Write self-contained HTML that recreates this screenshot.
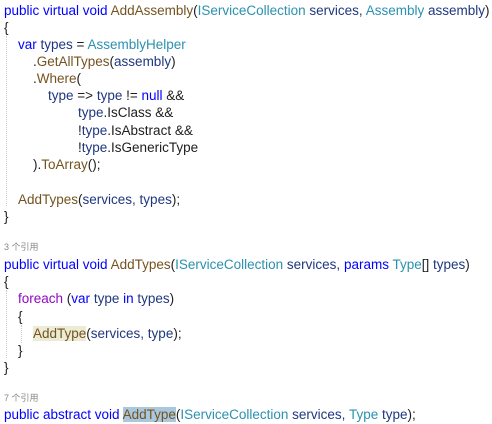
<!DOCTYPE html>
<html><head><meta charset="utf-8"><style>
body{margin:0;width:492px;height:424px;background:#fff;overflow:hidden;position:relative;font-family:"Liberation Sans","Noto Sans CJK SC",sans-serif;font-size:13.5px;color:#1f377f}
.l{position:absolute;white-space:pre;line-height:17px;height:17px}
.k{color:#0000ff}.m{color:#74531f}.t{color:#2b91af}.p{color:#8f08c4}.d{color:#1e1e1e}
.r{font-size:9px;color:#888}
.g{position:absolute;border-left:1px dotted #ccc}
.h1{background:#ebebd6}.h2{background:#a9c8dd}
</style></head><body>
<div class="g" style="left:6px;top:36px;height:170px"></div>
<div class="g" style="left:6px;top:290px;height:68px"></div>
<div class="g" style="left:21px;top:325px;height:18px"></div>
<div class="l" style="left:4px;top:2px"><span class="k">public virtual void</span> <span class="m">AddAssembly</span><span class="d">(</span><span class="t">IServiceCollection</span> services, <span class="t">Assembly</span> assembly<span class="d">)</span></div>
<div class="l d" style="left:4px;top:19px">{</div>
<div class="l" style="left:18px;top:36px"><span class="k">var</span> types <span class="d">=</span> <span class="t">AssemblyHelper</span></div>
<div class="l" style="left:33px;top:53px"><span class="d">.</span><span class="m">GetAllTypes</span><span class="d">(</span>assembly<span class="d">)</span></div>
<div class="l" style="left:33px;top:70px"><span class="d">.</span><span class="m">Where</span><span class="d">(</span></div>
<div class="l" style="left:48px;top:87px">type <span class="d">=&gt;</span> type <span class="d">!=</span> <span class="k">null</span> <span class="d">&amp;&amp;</span></div>
<div class="l" style="left:78px;top:104px">type<span class="d">.IsClass &amp;&amp;</span></div>
<div class="l" style="left:78px;top:122px"><span class="d">!</span>type<span class="d">.IsAbstract &amp;&amp;</span></div>
<div class="l" style="left:78px;top:139px"><span class="d">!</span>type<span class="d">.IsGenericType</span></div>
<div class="l" style="left:33px;top:156px"><span class="d">).</span><span class="m">ToArray</span><span class="d">();</span></div>
<div class="l" style="left:18px;top:191px"><span class="m">AddTypes</span><span class="d">(</span>services, types<span class="d">);</span></div>
<div class="l d" style="left:4px;top:208px">}</div>
<div class="l r" style="left:4px;top:239px">3 个引用</div>
<div class="l" style="left:4px;top:256px"><span class="k">public virtual void</span> <span class="m">AddTypes</span><span class="d">(</span><span class="t">IServiceCollection</span> services, <span class="k">params</span> <span class="t">Type</span><span class="d">[]</span> types<span class="d">)</span></div>
<div class="l d" style="left:4px;top:273px">{</div>
<div class="l" style="left:18px;top:290px"><span class="p">foreach</span> <span class="d">(</span><span class="k">var</span> type <span class="k">in</span> types<span class="d">)</span></div>
<div class="l d" style="left:18px;top:308px">{</div>
<div class="l" style="left:33px;top:325px"><span class="m h1">AddType</span><span class="d">(</span>services, type<span class="d">);</span></div>
<div class="l d" style="left:18px;top:342px">}</div>
<div class="l d" style="left:4px;top:359px">}</div>
<div class="l r" style="left:4px;top:390px">7 个引用</div>
<div class="l" style="left:4px;top:406px"><span class="k">public abstract void</span> <span class="m h2">AddType</span><span class="d">(</span><span class="t">IServiceCollection</span> services, <span class="t">Type</span> type<span class="d">);</span></div>
</body></html>
